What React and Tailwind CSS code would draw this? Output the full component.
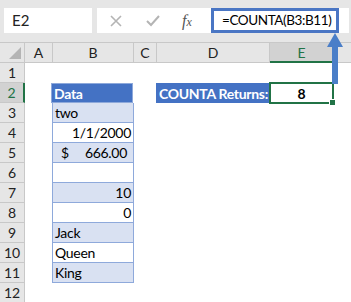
import React from "react";

const F = { fontFamily: "Lato, 'Open Sans', sans-serif" };

function RowHdr({ n, sel }) {
  return (
    <div
      className={`w-[25px] h-[20px] shrink-0 flex items-center justify-center text-[14px] border-b border-[#c8c8c8] ${
        sel ? "bg-[#d2d2d2] text-[#217346] border-r-2 border-r-[#217346]" : "bg-[#e6e6e6] text-[#222] border-r border-r-[#c8c8c8]"
      }`}
    >
      {n}
    </div>
  );
}

const dataRows = [
  { r: 3, t: "two", a: "left", blue: true },
  { r: 4, t: "1/1/2000", a: "right", blue: false },
  { r: 5, t: "acct", a: "right", blue: true },
  { r: 6, t: "", a: "left", blue: false },
  { r: 7, t: "10", a: "right", blue: true },
  { r: 8, t: "0", a: "right", blue: false },
  { r: 9, t: "Jack", a: "left", blue: true },
  { r: 10, t: "Queen", a: "left", blue: false },
  { r: 11, t: "King", a: "left", blue: true },
];

function BCell({ d }) {
  return (
    <div
      className={`w-[82px] h-[20px] shrink-0 border-x border-b border-[#8ea9db] flex items-center text-[14px] tracking-[-0.3px] whitespace-nowrap text-black px-[2px] ${
        d.blue ? "bg-[#d9e1f2]" : "bg-white"
      } ${d.a === "right" ? "justify-end" : "justify-start"}`}
    >
      {d.t === "acct" ? (
        <div className="flex w-full justify-between pl-[6px] pr-[4px]">
          <span>$</span>
          <span>666.00</span>
        </div>
      ) : (
        d.t
      )}
    </div>
  );
}

export default function App() {
  return (
    <div className="w-[351px] h-[302px] overflow-hidden bg-white relative" style={F}>
      {/* formula bar area */}
      <div className="h-[42px] bg-[#e6e6e6] flex pt-[8px]">
        <div className="ml-[4px] w-[88px] h-[25px] bg-white flex items-center pl-[8px] text-[15px] text-[#222]">
          E2
        </div>
        <div className="ml-[5px] w-[252px] h-[25px] bg-white flex items-center">
          <svg width="12" height="12" viewBox="0 0 12 12" className="ml-[13px] shrink-0">
            <path d="M1 1 L11 11 M11 1 L1 11" stroke="#b4b4b4" strokeWidth="1.6" />
          </svg>
          <svg width="14" height="12" viewBox="0 0 14 12" className="ml-[24px] shrink-0">
            <path d="M1 6 L5 10 L13 1" stroke="#b4b4b4" strokeWidth="2" fill="none" />
          </svg>
          <div
            className="ml-[22px] w-[20px] shrink-0 text-[16px] italic text-[#555]"
            style={{ fontFamily: "'Liberation Serif', serif" }}
          >
            f<span className="text-[12px]">x</span>
          </div>
          <div className="ml-[9px] w-[128px] h-[25px] shrink-0 border-[3px] border-[#4a76c4] flex items-center pl-[8px] text-[13.5px] tracking-[-0.4px] whitespace-nowrap text-black">
            =COUNTA(B3:B11)
          </div>
        </div>
      </div>

      {/* column header row */}
      <div className="h-[21px] flex bg-[#e6e6e6] border-y border-[#c8c8c8] text-[14px] text-[#222]">
        <div className="w-[25px] shrink-0 border-r border-[#c8c8c8] relative">
          <svg width="12" height="12" viewBox="0 0 12 12" className="absolute right-[3px] bottom-[3px]">
            <path d="M12 0 L12 12 L0 12 Z" fill="#b4b4b4" />
          </svg>
        </div>
        <div className="w-[28px] shrink-0 border-r border-[#c8c8c8] flex items-center justify-center">A</div>
        <div className="w-[81px] shrink-0 border-r border-[#c8c8c8] flex items-center justify-center">B</div>
        <div className="w-[23px] shrink-0 border-r border-[#c8c8c8] flex items-center justify-center">C</div>
        <div className="w-[113px] shrink-0 border-r border-[#c8c8c8] flex items-center justify-center">D</div>
        <div className="w-[64px] shrink-0 border-r border-[#c8c8c8] bg-[#d2d2d2] border-b-2 border-b-[#217346] -mb-px flex items-center justify-center text-[#217346]">
          E
        </div>
        <div className="flex-1" />
      </div>

      {/* rows */}
      <div className="flex flex-col">
        <div className="flex">
          <RowHdr n={1} />
        </div>
        <div className="flex">
          <RowHdr n={2} sel />
          <div className="w-[26px] shrink-0" />
          <div className="w-[82px] h-[20px] shrink-0 border border-[#8ea9db] bg-[#4472c4] text-white font-bold text-[14px] tracking-[-0.3px] flex items-center px-[2px]">
            Data
          </div>
          <div className="w-[23px] shrink-0" />
          <div className="w-[113px] h-[20px] shrink-0 bg-[#4472c4] text-white font-bold text-[14px] tracking-[-0.3px] whitespace-nowrap flex items-center pl-[3px]">
            COUNTA Returns:
          </div>
          <div className="w-[65px] h-[20px] shrink-0 relative flex items-center justify-center font-bold text-[14px] text-black">
            8
            <div className="absolute -top-px left-0 right-0 -bottom-px border-2 border-[#217346]" />
            <div className="absolute right-[-2px] bottom-[-3px] w-[5px] h-[5px] bg-[#217346] border border-white box-content" />
          </div>
        </div>
        {dataRows.map((d) => (
          <div className="flex" key={d.r}>
            <RowHdr n={d.r} />
            <div className="w-[27px] shrink-0" />
            <BCell d={d} />
          </div>
        ))}
        <div className="flex">
          <RowHdr n={12} />
        </div>
      </div>

      {/* arrow annotation */}
      <svg className="absolute left-0 top-0" width="351" height="302" viewBox="0 0 351 302">
        <rect x="332" y="46" width="6" height="38" fill="#4a7ec8" />
        <path d="M335 33 L343 47 L327 47 Z" fill="#4a7ec8" />
      </svg>
    </div>
  );
}
